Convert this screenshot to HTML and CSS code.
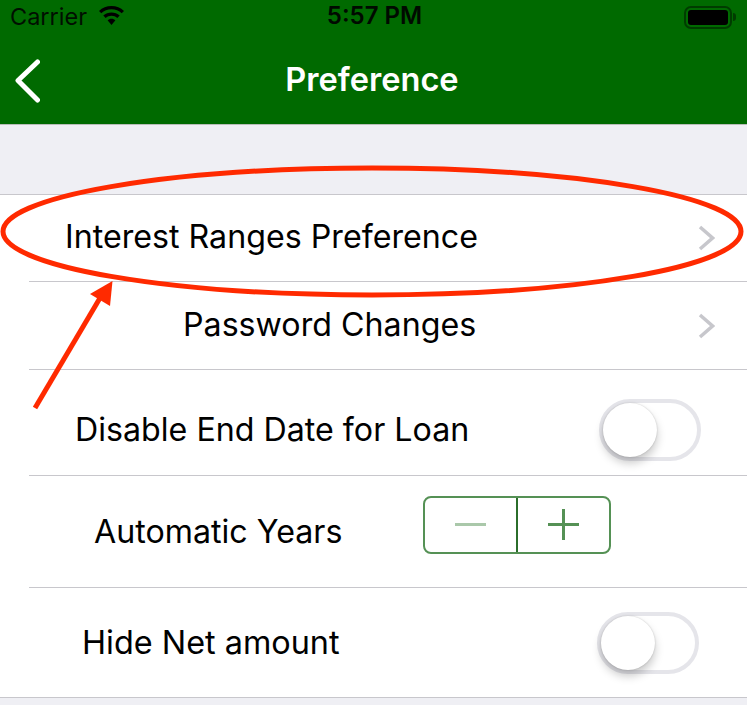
FILE: index.html
```html
<!DOCTYPE html>
<html lang="en">
<head>
<meta charset="utf-8">
<title>Preference</title>
<link rel="stylesheet" href="styles.css">
</head>
<body>
<div class="screen">
  <header class="header">
    <div class="status">
      <div class="status-left">
        <span class="carrier">Carrier</span>
        <svg class="wifi" width="29" height="20" viewBox="0 0 29 20"><path d="M14.5 3.3c3.900 0 7.500 1.500 10.200 4l2.300-2.400C23.700 1.800 19.300 0 14.500 0S5.300 1.800 2 4.900l2.300 2.400c2.700-2.500 6.300-4 10.200-4z"/><path d="M14.500 9.800c2.200 0 4.200.8 5.800 2.200l2.400-2.400c-2.200-2-5.100-3.200-8.200-3.200s-6 1.200-8.200 3.200L8.700 12c1.600-1.400 3.600-2.200 5.800-2.200z"/><path d="M14.500 12.700c-1.500 0-2.900.6-3.900 1.500l3.900 4.800 3.900-4.800c-1-.9-2.400-1.500-3.900-1.500z"/></svg>
      </div>
      <span class="time">5:57 PM</span>
      <div class="battery"><span class="battery-body"><span class="battery-fill"></span></span><span class="battery-cap"></span></div>
    </div>
    <nav class="nav">
      <svg class="back" width="26" height="44" viewBox="0 0 26 44"><path d="M23.500 3 4 21.500 23.500 41" fill="none" stroke="#fff" stroke-width="5" stroke-linecap="round" stroke-linejoin="round"/></svg>
      <h1 class="title">Preference</h1>
    </nav>
  </header>
  <main class="content">
    <ul class="list">
      <li class="row row-interest">
        <span class="label">Interest Ranges Preference</span>
        <svg class="chevron" width="17" height="26" viewBox="0 0 17 26"><path d="M2 2l12.500 11L2 24" fill="none" stroke="#c7c7cc" stroke-width="3.500"/></svg>
      </li>
      <li class="row row-password">
        <span class="label">Password Changes</span>
        <svg class="chevron" width="17" height="26" viewBox="0 0 17 26"><path d="M2 2l12.500 11L2 24" fill="none" stroke="#c7c7cc" stroke-width="3.500"/></svg>
      </li>
      <li class="row row-disable">
        <span class="label">Disable End Date for Loan</span>
        <span class="toggle"><span class="knob"></span></span>
      </li>
      <li class="row row-years">
        <span class="label">Automatic Years</span>
        <div class="stepper">
          <span class="step step-minus"><span class="minus"></span></span>
          <span class="step step-plus"><span class="plus"></span></span>
        </div>
      </li>
      <li class="row row-net">
        <span class="label">Hide Net amount</span>
        <span class="toggle"><span class="knob"></span></span>
      </li>
    </ul>
  </main>
  <svg class="annotation" width="747" height="705" viewBox="0 0 747 705">
    <ellipse cx="372" cy="231.500" rx="369" ry="63.500" fill="none" stroke="#ff2a00" stroke-width="5"/>
    <path d="M35 408 100 298" fill="none" stroke="#ff2a00" stroke-width="5"/>
    <path d="M112.500 281 90 294 110 306z" fill="#ff2a00"/>
  </svg>
</div>
</body>
</html>
```
FILE: styles.css
```css
* { box-sizing: border-box; }
html, body { margin: 0; padding: 0; }
body { font-family: Inter, "Liberation Sans", sans-serif; background: #efeff4; color: #000; }
.screen { position: relative; width: 747px; height: 705px; overflow: hidden; }

.header { height: 125px; background: #006a00; border-bottom: 1px solid #b8bdb8; display: flex; flex-direction: column; }
.status { height: 34px; display: flex; align-items: center; justify-content: space-between; padding: 0 11px 0 10px; position: relative; }
.status-left { display: flex; align-items: center; gap: 10px; }
.carrier { font-size: 23.500px; line-height: 34px; color: #000; opacity: .85; }
.wifi { fill: #000; margin-top: -3px; }
.time { position: absolute; left: 2px; right: 0; top: -1px; text-align: center; font-size: 24px; font-weight: 600; line-height: 34px; color: #000; opacity: .9; }
.battery { display: flex; align-items: center; gap: 1px; }
.battery-body { width: 48px; height: 23px; border: 2px solid #003c00; border-radius: 7px; padding: 2px; display: block; }
.battery-fill { display: block; width: 100%; height: 100%; background: #000; border-radius: 3px; }
.battery-cap { width: 3px; height: 8px; background: #003c00; border-radius: 0 3px 3px 0; }

.nav { flex: 1; display: flex; align-items: center; justify-content: center; position: relative; }
.back { position: absolute; left: 14px; top: 25px; }
.title { margin: 0 0 0 -3px; font-size: 32.600px; font-weight: 600; color: #fff; line-height: 40px; }

.content { padding-top: 69px; }
.list { list-style: none; margin: 0; padding: 0; background: #fff; border-top: 1px solid #c8c7cc; border-bottom: 1px solid #c8c7cc; }
.row { display: flex; align-items: center; justify-content: space-between; margin-left: 29px; border-bottom: 1px solid #c8c7cc; position: relative; }
.row:last-child { border-bottom: 0; }
.label { font-size: 32.200px; line-height: 40px; white-space: nowrap; margin-top: -2px; }
.row-disable .label, .row-years .label, .row-net .label { margin-top: 0; }
.row-net .label { font-size: 32.400px; }

.row-interest { height: 87px; padding: 0 32px 0 36px; }
.row-password { height: 88px; padding: 0 32px 0 154px; }
.row-disable { height: 106px; padding: 14px 46px 0 46px; }
.row-years { height: 112px; padding: 0 136px 0 65px; }
.row-net { height: 109px; padding: 0 48px 0 53px; }

.chevron { display: block; }

.toggle { display: block; width: 102px; height: 62px; border: 4px solid #e5e5ea; border-radius: 31px; position: relative; }
.knob { position: absolute; left: 0; top: 0; width: 54px; height: 54px; background: #fff; border-radius: 50%; box-shadow: 0 6px 10px rgba(0,0,0,.22), 0 0 2px rgba(0,0,0,.2); }

.stepper { display: flex; width: 188px; height: 58px; border: 2px solid #559155; border-radius: 8px; margin-top: -14px; }
.step { flex: 1; display: flex; align-items: center; justify-content: center; }
.step-minus { border-right: 2px solid #2b6e2b; }
.minus { display: block; width: 31px; height: 3px; background: #aac8aa; }
.plus { display: block; position: relative; width: 31px; height: 31px; background: linear-gradient(#559155, #559155) center / 100% 3px no-repeat, linear-gradient(#559155, #559155) center / 3px 100% no-repeat; }

.annotation { position: absolute; left: 0; top: 0; pointer-events: none; }
```
